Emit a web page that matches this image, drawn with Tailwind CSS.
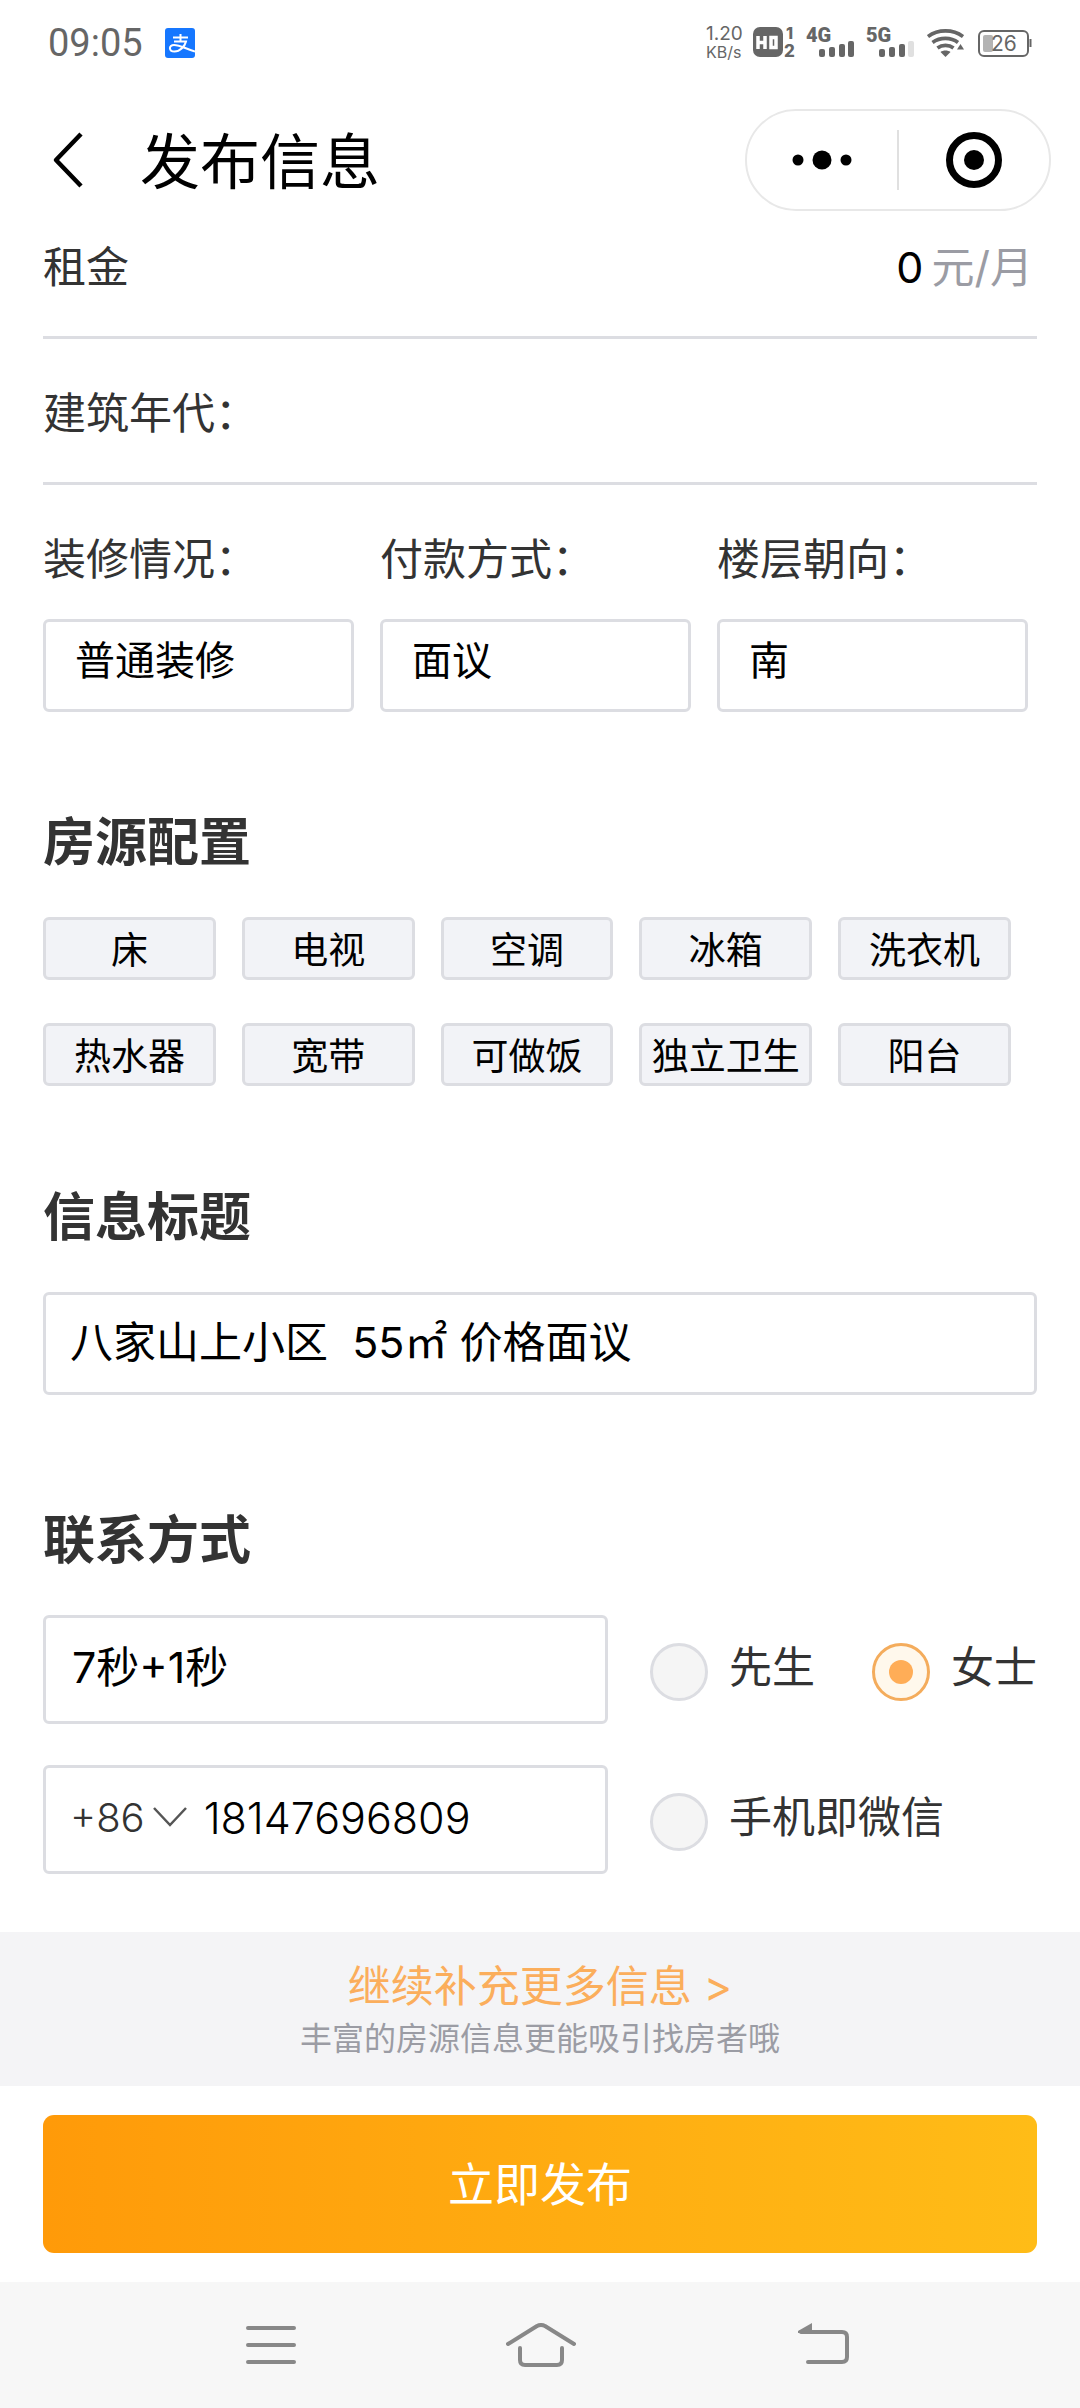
<!DOCTYPE html>
<html lang="zh-CN">
<head>
<meta charset="utf-8">
<meta name="viewport" content="width=device-width, initial-scale=1">
<title>发布信息</title>
<script src="https://cdn.jsdelivr.net/npm/@tailwindcss/browser@4"></script>
</head>
<body class="flex min-h-screen flex-col bg-white font-['Inter','Noto_Sans_CJK_SC',sans-serif] text-[43px] leading-[60px] text-[#333]">

<!-- Status bar -->
<div class="flex h-[85px] items-center justify-between pr-12 pl-[48px] text-[#666]">
  <div class="flex items-center gap-[22px]">
    <span class="font-['Roboto',sans-serif] text-[38px] leading-[46px]">09:05</span>
    <svg class="size-[30px]" viewBox="0 0 30 30" aria-label="支付宝">
      <rect width="30" height="30" rx="3" fill="#1677ff"/>
      <path d="M8 9.500H23M15.500 6V13M9 13.500H21C20 18 15 23.500 9.500 23.500C3.500 23.500 3.500 17 9 17C15 17 20 20.500 30 23.500" fill="none" stroke="#fff" stroke-width="2"/>
    </svg>
  </div>
  <div class="flex items-center">
    <div class="w-[47px] leading-[18px]"><div class="text-[19px]">1.20</div><div class="text-[16px]">KB/s</div></div>
    <svg class="mr-3 h-[31px] w-[42px] overflow-visible" viewBox="0 0 42 31" fill="#666">
      <rect width="30" height="30" rx="7"/>
      <path d="M5 9V22M12 9V22M5 15.500H12M18 10.500H23V20.500H18Z" fill="none" stroke="#fff" stroke-width="3.500"/>
      <text x="33" y="12" font-family="Inter" font-size="16" font-weight="800">1</text>
      <text x="31" y="30" font-family="Inter" font-size="17" font-weight="800">2</text>
    </svg>
    <svg class="mr-3 h-[31px] w-[48px] overflow-visible" viewBox="0 0 48 31" fill="#666">
      <text x="-1" y="15" font-family="Roboto" font-size="20" font-weight="900">4G</text>
      <rect x="12" y="22" width="6" height="8" rx="2"/><rect x="22" y="20" width="6" height="10" rx="2"/><rect x="32" y="17" width="6" height="13" rx="2"/><rect x="41" y="14" width="6" height="16" rx="2"/>
    </svg>
    <svg class="mr-3 h-[31px] w-[48px] overflow-visible" viewBox="0 0 48 31" fill="#666">
      <text x="-1" y="15" font-family="Roboto" font-size="20" font-weight="900">5G</text>
      <rect x="12" y="22" width="6" height="8" rx="2"/><rect x="22" y="20" width="6" height="10" rx="2"/><rect x="32" y="17" width="6" height="13" rx="2"/><rect x="41" y="14" width="6" height="16" rx="2" fill="#e0e0e0"/>
    </svg>
    <svg class="mr-[14px] h-[30px] w-[37px]" viewBox="0 0 37 30" fill="none" stroke="#666" stroke-width="3.600">
      <path d="M1 8.500C11 1 26 1 36 8.500M5.500 14.500C13 9 24 9 31 14.500M10.500 20C15 16.500 22 16.500 26.500 20"/>
      <path d="M13.500 24C16 22 21 22 23.500 24L18.500 29Z" fill="#666" stroke="none"/><path d="M33.500 16L37 21.500H30Z" fill="#666" stroke="none"/>
    </svg>
    <svg class="h-[31px] w-[54px]" viewBox="0 0 54 31">
      <rect x="1" y="4" width="49" height="25" rx="5" fill="none" stroke="#666" stroke-width="2"/>
      <path d="M52.500 12V20" stroke="#666" stroke-width="2"/>
      <rect x="5" y="8" width="10" height="17" rx="2" fill="#b3b3b3"/>
      <text x="13" y="24" font-family="Inter" font-size="21" fill="#666">26</text>
    </svg>
  </div>
</div>

<!-- Title bar -->
<header class="flex items-center justify-between pt-6 pr-[29px] pl-[52px] text-black">
  <div class="flex items-center gap-[56px]">
    <button type="button" aria-label="返回"><svg class="h-[56px] w-8" viewBox="0 0 32 56" fill="none" stroke="#000" stroke-width="4.500"><path d="M29 2L4 28L29 54" stroke-linejoin="round"/></svg></button>
    <h1 class="pt-1 text-[60px] leading-[80px]">发布信息</h1>
  </div>
  <div class="flex h-[102px] w-[306px] items-center rounded-full border-2 border-[#e8e8e8]">
    <button type="button" class="flex flex-1 justify-center" aria-label="更多"><svg class="h-5 w-[60px]" viewBox="0 0 60 20"><circle cx="6" cy="10" r="5.500"/><circle cx="30" cy="10" r="9.500"/><circle cx="54" cy="10" r="5.500"/></svg></button>
    <span class="h-[60px] w-[2px] bg-[#e0e0e0]"></span>
    <button type="button" class="flex flex-1 justify-center" aria-label="关闭"><svg class="size-[58px]" viewBox="0 0 58 58"><circle cx="29" cy="29" r="24.500" fill="none" stroke="#000" stroke-width="7"/><circle cx="29" cy="29" r="10"/></svg></button>
  </div>
</header>

<form class="flex flex-col px-[43px]">
  <div class="flex h-32 items-start justify-between border-b-3 border-[#dcdde2] pt-[26px]">
    <label for="rent">租金</label>
    <div class="flex gap-2 pr-1 text-[#9b9ca4]"><input id="rent" value="0" class="w-[160px] text-right text-black outline-none"><span>元/月</span></div>
  </div>
  <div class="flex h-[146px] items-center border-b-3 border-[#dcdde2] pt-1">
    <label for="year">建筑年代：</label>
    <input id="year" class="min-w-0 flex-1 outline-none">
  </div>

  <div class="grid grid-cols-3 gap-[26px] pt-11 pr-[9px]">
    <div class="flex flex-col gap-[30px]"><label for="deco">装修情况：</label>
      <select id="deco" class="h-[93px] appearance-none rounded-md border-3 border-[#dcdde2] px-[29px] pb-[10px] text-[40px] text-black"><option>普通装修</option></select></div>
    <div class="flex flex-col gap-[30px]"><label for="pay">付款方式：</label>
      <select id="pay" class="h-[93px] appearance-none rounded-md border-3 border-[#dcdde2] px-[29px] pb-[10px] text-[40px] text-black"><option>面议</option></select></div>
    <div class="flex flex-col gap-[30px]"><label for="face">楼层朝向：</label>
      <select id="face" class="h-[93px] appearance-none rounded-md border-3 border-[#dcdde2] px-[29px] pb-[10px] text-[40px] text-black"><option>南</option></select></div>
  </div>

  <h2 class="pt-[101px] text-[52px] font-bold">房源配置</h2>
  <div class="grid grid-cols-5 gap-x-[26px] gap-y-[43px] pt-11 pr-[26px] text-[37px] text-black">
    <button type="button" class="h-[63px] rounded-md border-3 border-[#dcdde2] bg-[#f2f3f7] pt-1 leading-[53px] whitespace-nowrap">床</button>
    <button type="button" class="h-[63px] rounded-md border-3 border-[#dcdde2] bg-[#f2f3f7] pt-1 leading-[53px] whitespace-nowrap">电视</button>
    <button type="button" class="h-[63px] rounded-md border-3 border-[#dcdde2] bg-[#f2f3f7] pt-1 leading-[53px] whitespace-nowrap">空调</button>
    <button type="button" class="h-[63px] rounded-md border-3 border-[#dcdde2] bg-[#f2f3f7] pt-1 leading-[53px] whitespace-nowrap">冰箱</button>
    <button type="button" class="h-[63px] rounded-md border-3 border-[#dcdde2] bg-[#f2f3f7] pt-1 leading-[53px] whitespace-nowrap">洗衣机</button>
    <button type="button" class="h-[63px] rounded-md border-3 border-[#dcdde2] bg-[#f2f3f7] pt-1 leading-[53px] whitespace-nowrap">热水器</button>
    <button type="button" class="h-[63px] rounded-md border-3 border-[#dcdde2] bg-[#f2f3f7] pt-1 leading-[53px] whitespace-nowrap">宽带</button>
    <button type="button" class="h-[63px] rounded-md border-3 border-[#dcdde2] bg-[#f2f3f7] pt-1 leading-[53px] whitespace-nowrap">可做饭</button>
    <button type="button" class="h-[63px] rounded-md border-3 border-[#dcdde2] bg-[#f2f3f7] pt-1 leading-[53px] whitespace-nowrap">独立卫生</button>
    <button type="button" class="h-[63px] rounded-md border-3 border-[#dcdde2] bg-[#f2f3f7] pt-1 leading-[53px] whitespace-nowrap">阳台</button>
  </div>

  <h2 class="pt-[102px] text-[52px] font-bold"><label for="title">信息标题</label></h2>
  <input id="title" value="八家山上小区  55㎡ 价格面议" class="mt-11 h-[103px] rounded-md border-3 border-[#dcdde2] px-6 pb-[10px] text-black">

  <h2 class="pt-[116px] text-[52px] font-bold">联系方式</h2>
  <div class="flex gap-[42px] pt-11">
    <input aria-label="联系人" value="7秒+1秒" class="h-[109px] min-w-0 flex-1 rounded-md border-3 border-[#dcdde2] px-[26px] pb-3 text-black">
    <div class="flex w-[387px] items-center justify-between">
      <label class="flex items-center gap-[21px]"><input type="radio" name="sex" class="mt-1 size-[58px] appearance-none rounded-full border-3 border-[#dcdde2] bg-[#f5f5f5]"><span class="pb-[6px]">先生</span></label>
      <label class="flex items-center gap-[21px]"><input type="radio" name="sex" checked class="mt-1 flex size-[58px] appearance-none items-center justify-center rounded-full border-3 border-[#f4ac5c] bg-[#fff8ec] before:block before:size-6 before:rounded-full before:bg-[#ffad57]"><span class="pb-[6px]">女士</span></label>
    </div>
  </div>
  <div class="flex gap-[42px] pt-[41px] pb-[58px]">
    <div class="flex h-[109px] min-w-0 flex-1 items-center rounded-md border-3 border-[#dcdde2] px-6 pb-1">
      <button type="button" class="flex items-center gap-2 text-[40px] font-light">+86
        <svg class="h-[21px] w-[34px]" viewBox="0 0 34 21" fill="none" stroke="#555" stroke-width="2.500"><path d="M1 1L17 18L33 1"/></svg></button>
      <input aria-label="手机号" value="18147696809" class="ml-[17px] min-w-0 flex-1 font-light text-black outline-none">
    </div>
    <label class="flex w-[387px] items-center gap-[21px]"><input type="checkbox" class="mt-1 size-[58px] appearance-none rounded-full border-3 border-[#dcdde2] bg-[#f5f5f5]"><span class="pb-[6px]">手机即微信</span></label>
  </div>
</form>

<a href="#more" class="flex h-[154px] flex-col items-center bg-[#f4f4f6] pt-6">
  <span class="text-[#fbae5c]">继续补充更多信息 &gt;</span>
  <span class="text-[32px] leading-[46px] text-[#9b9ca4]">丰富的房源信息更能吸引找房者哦</span>
</a>
<div class="px-[43px] py-[29px]">
  <button type="button" class="h-[138px] w-full rounded-[11px] bg-linear-to-r from-[#ff9a09] to-[#ffbc17] text-[46px] text-white">立即发布</button>
</div>

<!-- System navigation -->
<nav class="flex h-[126px] items-center justify-between bg-[#f7f7f7] pr-[231px] pl-[246px]">
  <button type="button" aria-label="最近任务"><svg class="h-[44px] w-[50px]" viewBox="0 0 50 44" stroke="#888" stroke-width="4" stroke-linecap="round"><path d="M2 5H48M2 22H48M2 39H48"/></svg></button>
  <button type="button" class="mr-3" aria-label="主页"><svg class="h-[44px] w-[70px]" viewBox="0 0 70 44" fill="none" stroke="#888" stroke-width="4" stroke-linecap="round" stroke-linejoin="round"><path d="M2 21L31 3Q35 1 39 3L68 21M14 25V37Q14 42 19 42H51Q56 42 56 37V25"/></svg></button>
  <button type="button" aria-label="返回上一级"><svg class="h-[44px] w-[51px]" viewBox="0 0 51 44" fill="none" stroke="#888" stroke-width="4" stroke-linecap="round"><path d="M3 9H44Q49 9 49 14V34Q49 39 44 39H10"/><path d="M0 8L14 0V10H0Z" fill="#888" stroke="none"/></svg></button>
</nav>
</body>
</html>
